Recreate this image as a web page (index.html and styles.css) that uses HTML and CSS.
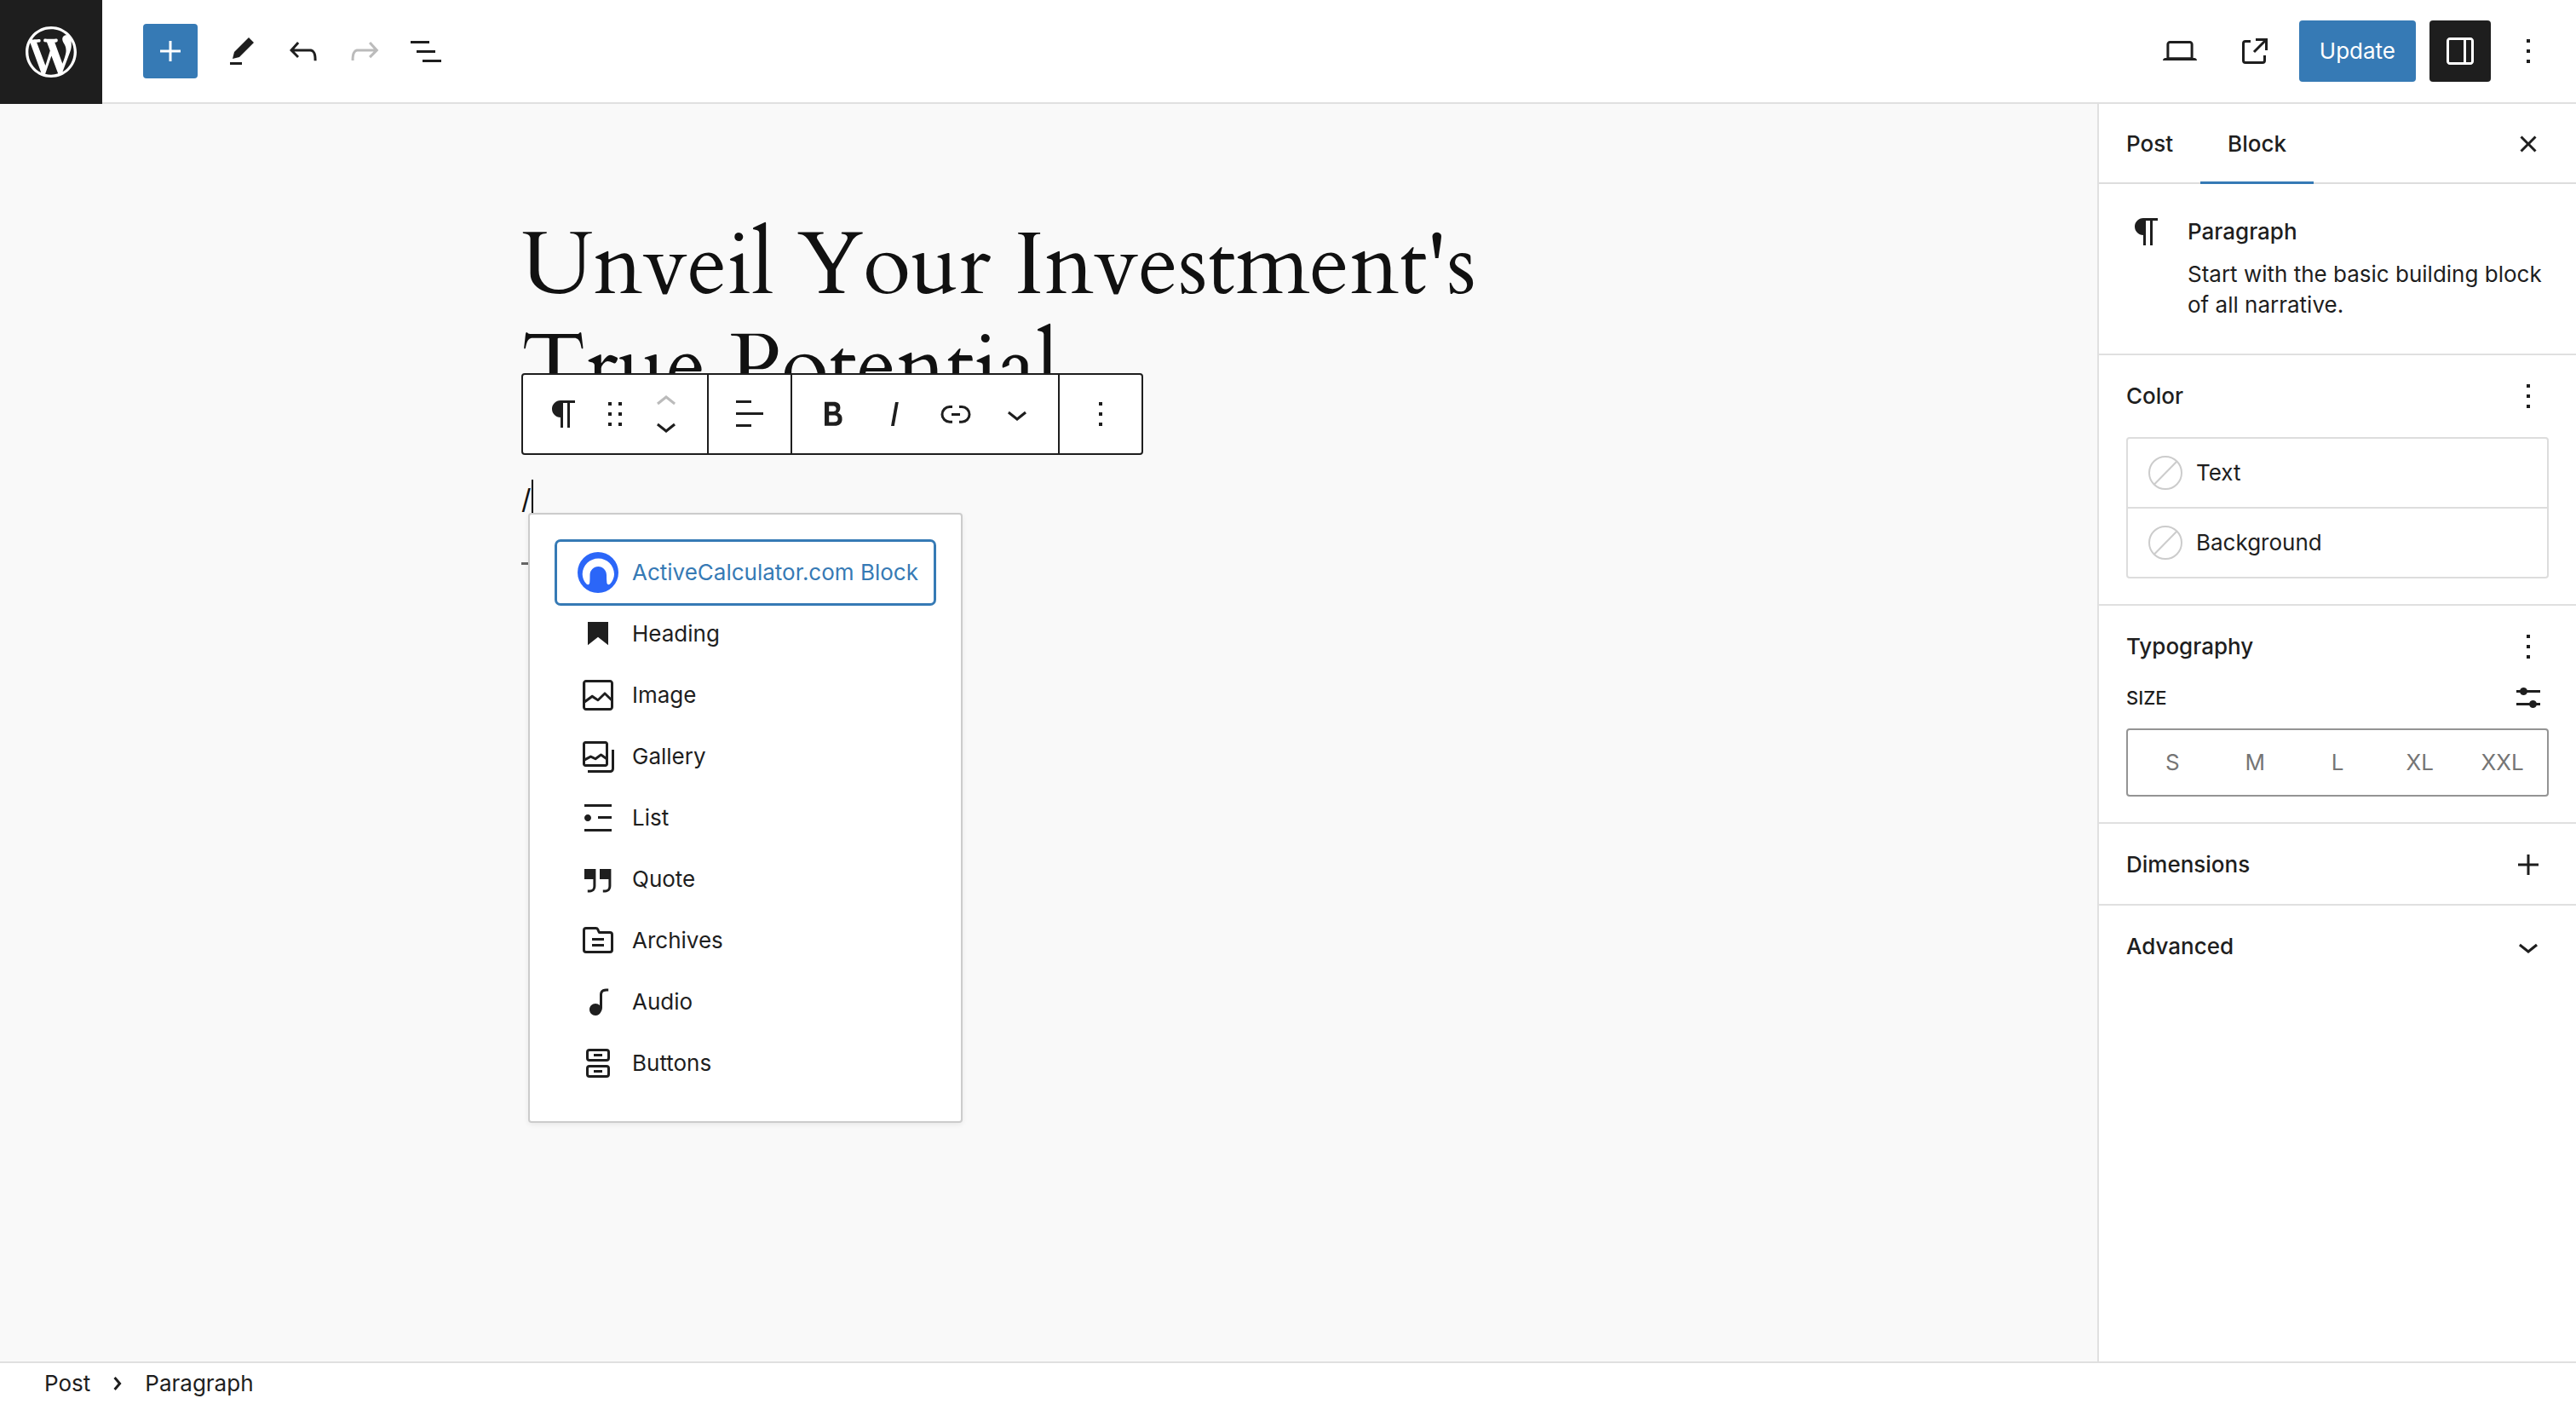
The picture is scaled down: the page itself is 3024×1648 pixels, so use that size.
FILE: index.html
```html
<!DOCTYPE html>
<html lang="en">
<head>
<meta charset="utf-8">
<title>Edit Post</title>
<link rel="stylesheet" href="styles.css">
</head>
<body>
<svg class="sprite" aria-hidden="true">
  <symbol id="more" viewBox="0 0 24 24"><path d="M13 19h-2v-2h2v2zm0-6h-2v-2h2v2zm0-6h-2V5h2v2z"/></symbol>
  <symbol id="plus" viewBox="0 0 24 24"><path d="M11.25 6h1.5v5.25H18v1.5h-5.25V18h-1.5v-5.25H6v-1.5h5.25z"/></symbol>
  <symbol id="chevron-down" viewBox="0 0 24 24"><path d="M17.5 11.6L12 16l-5.5-4.4.9-1.2L12 14l4.5-3.6 1 1.2z"/></symbol>
  <symbol id="paragraph" viewBox="0 0 24 24"><path d="m9.99609 14v-.2251l.00391.0001v6.225h1.5v-14.5h2.5v14.5h1.5v-14.5h3v-1.5h-8.50391c-2.76142 0-5 2.23858-5 5 0 2.7614 2.23858 5 5 5z"/></symbol>
</svg>
<div class="editor">
  <header class="topbar">
    <a class="home" href="#" aria-label="View Posts"><svg class="home-logo" viewBox="0 0 20 20"><path d="M20 10c0-5.51-4.49-10-10-10C4.48 0 0 4.49 0 10c0 5.52 4.48 10 10 10 5.51 0 10-4.48 10-10zM7.78 15.37L4.37 6.22c.55-.02 1.17-.08 1.17-.08.5-.06.44-1.13-.06-1.11 0 0-1.45.11-2.37.11-.18 0-.37 0-.58-.01C4.12 2.69 6.87 1.11 10 1.11c2.33 0 4.45.87 6.05 2.34-.68-.11-1.65.39-1.65 1.58 0 .74.45 1.36.9 2.1.35.61.55 1.36.55 2.46 0 1.49-1.4 5-1.4 5l-3.03-8.37c.54-.02.82-.17.82-.17.5-.05.44-1.25-.06-1.22 0 0-1.44.12-2.38.12-.87 0-2.33-.12-2.33-.12-.5-.03-.56 1.2-.06 1.22l.92.08 1.26 3.41zM17.41 10c.24-.64.74-1.87.43-4.25.7 1.29 1.05 2.71 1.05 4.25 0 3.29-1.73 6.24-4.4 7.78.97-2.59 1.94-5.2 2.92-7.78zM6.1 18.09C3.12 16.65 1.11 13.53 1.11 10c0-1.3.23-2.48.72-3.59C3.25 10.3 4.67 14.2 6.1 18.09zm4.03-6.63l2.58 6.98c-.86.29-1.76.45-2.71.45-.79 0-1.57-.11-2.29-.33.81-2.38 1.62-4.74 2.42-7.1z"/></svg></a>
    <div class="bar">
      <div class="tools">
        <button class="inserter" aria-label="Add block"><svg class="icon"><use href="#plus"/></svg></button>
        <button class="tool" aria-label="Tools"><svg class="icon" viewBox="0 0 24 24"><path d="m19 7-3-3-8.5 8.5-1 4 4-1L19 7Zm-7 11.5H5V20h7v-1.5Z"/></svg></button>
        <button class="tool" aria-label="Undo"><svg class="icon" viewBox="0 0 24 24"><path d="M18.3 11.7c-.6-.6-1.4-.9-2.3-.9H6.7l2.9-3.3-1.1-1-4.5 5L8.5 16l1-1-2.7-2.7H16c.5 0 .9.2 1.3.5 1 1 1 3.4 1 4.5v.3h1.5v-.2c0-1.5 0-4.3-1.5-5.7z"/></svg></button>
        <button class="tool" aria-label="Redo" disabled><svg class="icon" viewBox="0 0 24 24"><path d="M15.6 6.5l-1.1 1 2.9 3.3H8c-.9 0-1.7.3-2.3.9-1.4 1.5-1.4 4.2-1.4 5.6v.2h1.5v-.3c0-1.1 0-3.5 1-4.5.3-.3.7-.5 1.3-.5h9.2L14.5 15l1.1 1.1 4.6-4.6-4.6-5z"/></svg></button>
        <button class="tool" aria-label="Document overview"><svg class="icon" viewBox="0 0 24 24"><path d="M3 6h11v1.5H3V6Zm3.5 5.5h11V13h-11v-1.5ZM21 17H10v1.5h11V17Z"/></svg></button>
      </div>
      <div class="actions">
        <button class="tool" aria-label="Preview"><svg class="icon" viewBox="0 0 24 24"><path d="M20.5 16h-.7V8c0-1.1-.9-2-2-2H6.2c-1.1 0-2 .9-2 2v8h-.7c-.8 0-1.5.7-1.5 1.5h20c0-.8-.7-1.5-1.5-1.5zM5.7 8c0-.3.2-.5.5-.5h11.6c.3 0 .5.2.5.5v7.6H5.7V8z"/></svg></button>
        <a class="tool" href="#" aria-label="View Post"><svg class="icon" viewBox="0 0 24 24"><path d="M19.5 4.5h-7V6h4.44l-5.97 5.97 1.06 1.06L18 7.06v4.44h1.5v-7Zm-13 1a2 2 0 0 0-2 2v10a2 2 0 0 0 2 2h10a2 2 0 0 0 2-2v-3H17v3a.5.5 0 0 1-.5.5h-10a.5.5 0 0 1-.5-.5v-10a.5.5 0 0 1 .5-.5h3V5.5h-3Z"/></svg></a>
        <button class="update">Update</button>
        <div class="pair">
          <button class="tool pressed" aria-label="Settings"><svg class="icon" viewBox="0 0 24 24"><path d="M18 4H6c-1.1 0-2 .9-2 2v12c0 1.1.9 2 2 2h12c1.1 0 2-.9 2-2V6c0-1.1-.9-2-2-2zm-4 14.5H6c-.3 0-.5-.2-.5-.5V6c0-.3.2-.5.5-.5h8v13zm4.5-.5c0 .3-.2.5-.5.5h-2.5v-13H18c.3 0 .5.2.5.5v12z"/></svg></button>
          <button class="tool" aria-label="Options"><svg class="icon"><use href="#more"/></svg></button>
        </div>
      </div>
    </div>
  </header>

  <div class="body">
    <main class="canvas">
      <div class="column">
        <h1 class="title">Unveil Your Investment's True Potential</h1>
        <div class="block">
          <p class="text">/<span class="caret"></span></p>
          <div class="toolbar" role="toolbar" aria-label="Block tools">
            <div class="group">
              <button class="tool" aria-label="Paragraph"><svg class="icon"><use href="#paragraph"/></svg></button>
              <button class="tool drag" aria-label="Drag"><svg class="icon" viewBox="0 0 24 24"><path d="M8 7h2V5H8v2zm0 6h2v-2H8v2zm0 6h2v-2H8v2zm6-14v2h2V5h-2zm0 8h2v-2h-2v2zm0 6h2v-2h-2v2z"/></svg></button>
              <div class="mover">
                <button class="tool" aria-label="Move up" disabled><svg class="icon" viewBox="0 0 24 24"><path d="M6.5 12.4L12 8l5.5 4.4-.9 1.2L12 10l-4.5 3.6-1-1.2z"/></svg></button>
                <button class="tool" aria-label="Move down"><svg class="icon"><use href="#chevron-down"/></svg></button>
              </div>
            </div>
            <div class="group">
              <button class="tool" aria-label="Align text"><svg class="icon" viewBox="0 0 24 24"><path d="M13 5.5H4V4h9v1.5Zm7 7H4V11h16v1.5Zm-7 7H4V18h9v1.5Z"/></svg></button>
            </div>
            <div class="group">
              <button class="tool" aria-label="Bold"><svg class="icon" viewBox="0 0 24 24"><path d="M14.7 11.3c1-.6 1.5-1.6 1.5-3 0-2.3-1.3-3.4-4-3.4H7v14h5.8c1.4 0 2.5-.3 3.3-1 .8-.7 1.2-1.7 1.2-2.9.1-1.9-.8-3.1-2.6-3.7zm-5.1-4h2.3c.6 0 1.1.1 1.4.4.3.3.5.7.5 1.2s-.2 1-.5 1.2c-.3.3-.8.4-1.4.4H9.6V7.3zm4.6 9c-.4.3-1 .4-1.7.4H9.6v-3.9h2.9c.7 0 1.3.2 1.7.5.4.3.6.8.6 1.5s-.2 1.2-.6 1.5z"/></svg></button>
              <button class="tool" aria-label="Italic"><svg class="icon" viewBox="0 0 24 24"><path d="M12.5 5L10 19h1.9l2.5-14z"/></svg></button>
              <button class="tool" aria-label="Link"><svg class="icon" viewBox="0 0 24 24"><path d="M10 17.389H8.444A5.194 5.194 0 1 1 8.444 7H10v1.5H8.444a3.694 3.694 0 0 0 0 7.389H10v1.5ZM14 7h1.556a5.194 5.194 0 0 1 0 10.39H14v-1.5h1.556a3.694 3.694 0 0 0 0-7.39H14V7Zm-4.5 6h5v-1.5h-5V13Z"/></svg></button>
              <button class="tool" aria-label="More"><svg class="icon"><use href="#chevron-down"/></svg></button>
            </div>
            <div class="group">
              <button class="tool" aria-label="Options"><svg class="icon"><use href="#more"/></svg></button>
            </div>
          </div>
          <div class="menu">
            <button class="item selected"><svg class="icon" viewBox="0 0 48 48"><circle cx="24" cy="24" r="24" fill="#2b66f8"/><path fill="#fff" d="M24.500 7.500C14.500 7.500 5.700 15.500 5.700 26c0 4 1.800 8.500 4.800 11.500 1.600 1.300 3.200.8 3.700-1.300.3-3 .3-6.200.3-9.200 0-5.500 4.300-10 9.800-10s9.700 4.500 9.700 10c0 3 0 6.200.4 9.200.5 2.100 2.200 2.600 3.700 1.200 3-3 4.900-7.400 4.900-11.400C43 15.500 34.500 7.500 24.500 7.500z"/></svg>ActiveCalculator.com Block</button>
            <button class="item"><svg class="icon" viewBox="0 0 24 24"><path d="M6 5V18.5911L12 13.8473L18 18.5911V5H6Z"/></svg>Heading</button>
            <button class="item"><svg class="icon" viewBox="0 0 24 24"><path d="M19 3H5c-1.1 0-2 .9-2 2v14c0 1.1.9 2 2 2h14c1.1 0 2-.9 2-2V5c0-1.1-.9-2-2-2zM5 4.5h14c.3 0 .5.2.5.5v8.4l-3-2.9c-.3-.3-.8-.3-1 0L11.900 14 9 12c-.3-.2-.6-.2-.8 0l-3.600 2.600V5c-.1-.3.1-.5.4-.5zm14 15H5c-.3 0-.5-.2-.5-.5v-2.400l4.100-3 3 1.900c.3.2.7.2.9-.1L16 12l3.500 3.400V19c0 .3-.2.5-.5.5z"/></svg>Image</button>
            <button class="item"><svg class="icon" viewBox="0 0 24 24"><path fill-rule="evenodd" d="M16.375 4.5H4.625a.125.125 0 0 0-.125.125v8.254l2.859-1.54a.75.75 0 0 1 .68-.016l2.384 1.142 2.89-2.074a.75.75 0 0 1 .874 0l2.313 1.66V4.625a.125.125 0 0 0-.125-.125Zm.125 9.398-2.75-1.975-2.813 2.02a.75.75 0 0 1-.76.067l-2.444-1.17L4.5 14.583v1.792c0 .069.056.125.125.125h11.75a.125.125 0 0 0 .125-.125v-2.477ZM4.625 3C3.728 3 3 3.728 3 4.625v11.75C3 17.273 3.728 18 4.625 18h11.75c.898 0 1.625-.727 1.625-1.625V4.625C18 3.728 17.273 3 16.375 3H4.625ZM20 8v11c0 .69-.31 1-.999 1H6v1.5h13.001c1.52 0 2.499-.982 2.499-2.5V8H20Z"/></svg>Gallery</button>
            <button class="item"><svg class="icon" viewBox="0 0 24 24"><path d="M4 4v1.500h16V4H4zm8 8.500h8V11h-8v1.500zM4 20h16v-1.500H4V20zm4-8c0-1.100-.9-2-2-2s-2 .9-2 2 .9 2 2 2 2-.9 2-2z"/></svg>List</button>
            <button class="item"><svg class="icon" viewBox="0 0 24 24"><path d="M13 6v6h5.200v4c0 .8-.2 1.400-.5 1.700-.6.6-1.600.6-2.500.5h-.3v1.500h.5c1 0 2.300-.1 3.300-1 .6-.6 1-1.600 1-2.800V6H13zm-9 6h5.200v4c0 .8-.2 1.400-.5 1.700-.6.6-1.600.6-2.500.5h-.3v1.500h.5c1 0 2.300-.1 3.300-1 .6-.6 1-1.600 1-2.800V6H4v6z"/></svg>Quote</button>
            <button class="item"><svg class="icon" viewBox="0 0 24 24"><path fill-rule="evenodd" d="M11.934 7.406a1 1 0 0 0 .914.594H19a.5.5 0 0 1 .5.5v9a.5.5 0 0 1-.5.5H5a.5.5 0 0 1-.5-.5V6a.5.5 0 0 1 .5-.5h5.764a.5.5 0 0 1 .447.276l.723 1.63Zm1.064-1.216a.5.5 0 0 0 .462.31H19a2 2 0 0 1 2 2v9a2 2 0 0 1-2 2H5a2 2 0 0 1-2-2V6a2 2 0 0 1 2-2h5.764a2 2 0 0 1 1.789 1.106l.445 1.084ZM8.5 10.5h7V12h-7v-1.5Zm7 3.5h-7v1.5h7V14Z"/></svg>Archives</button>
            <button class="item"><svg class="icon" viewBox="0 0 24 24"><path d="M17.7 4.3c-1.2 0-2.8 0-3.8 1-.6.6-.9 1.5-.9 2.6V14c-.6-.6-1.5-1-2.5-1C8.6 13 7 14.6 7 16.5S8.6 20 10.5 20c1.5 0 2.8-1 3.3-2.3.5-.8.7-1.8.7-2.5V7.9c0-.7.2-1.2.5-1.6.6-.6 1.8-.6 2.8-.6h.3V4.3h-.4z"/></svg>Audio</button>
            <button class="item"><svg class="icon" viewBox="0 0 24 24"><path fill-rule="evenodd" d="M14.5 17.5h-5V16h5v1.500Zm0-9.500h-5V6.500h5V8ZM7 3.500h10a2 2 0 0 1 2 2V9a2 2 0 0 1-2 2H7a2 2 0 0 1-2-2V5.500a2 2 0 0 1 2-2ZM17 5H7a.5.5 0 0 0-.5.5V9a.5.5 0 0 0 .5.5h10a.5.5 0 0 0 .5-.5V5.500A.5.5 0 0 0 17 5ZM7 13h10a2 2 0 0 1 2 2v3.500a2 2 0 0 1-2 2H7a2 2 0 0 1-2-2V15a2 2 0 0 1 2-2Zm10 1.500H7a.5.5 0 0 0-.5.5v3.500a.5.5 0 0 0 .5.5h10a.5.5 0 0 0 .5-.5V15a.5.5 0 0 0-.5-.5Z"/></svg>Buttons</button>
          </div>
        </div>
        <hr class="separator">
      </div>
    </main>

    <aside class="sidebar">
      <div class="tabs">
        <button class="tab">Post</button>
        <button class="tab active">Block</button>
        <button class="close" aria-label="Close Settings"><svg class="icon" viewBox="0 0 24 24"><path d="M12 13.060l3.712 3.713 1.061-1.060L13.061 12l3.712-3.712-1.060-1.060L12 10.938 8.288 7.227l-1.061 1.060L10.939 12l-3.712 3.712 1.060 1.061L12 13.061z"/></svg></button>
      </div>
      <section class="card">
        <svg class="icon"><use href="#paragraph"/></svg>
        <div class="card-text">
          <h2 class="heading">Paragraph</h2>
          <p class="description">Start with the basic building block of all narrative.</p>
        </div>
      </section>
      <section class="panel">
        <div class="panel-head"><h2 class="heading">Color</h2><button class="mini" aria-label="Color options"><svg class="icon"><use href="#more"/></svg></button></div>
        <div class="colors">
          <button class="color"><svg class="swatch" viewBox="0 0 40 40"><circle cx="20" cy="20" r="19"/><path d="M7 33.500 33.500 6.500"/></svg>Text</button>
          <button class="color"><svg class="swatch" viewBox="0 0 40 40"><circle cx="20" cy="20" r="19"/><path d="M7 33.500 33.500 6.500"/></svg>Background</button>
        </div>
      </section>
      <section class="panel">
        <div class="panel-head"><h2 class="heading">Typography</h2><button class="mini" aria-label="Typography options"><svg class="icon"><use href="#more"/></svg></button></div>
        <div class="size-head"><h3 class="label">SIZE</h3><button class="mini" aria-label="Set custom size"><svg class="icon" viewBox="0 0 24 24"><path d="m19 7.500h-7.628c-.3089-.87389-1.1423-1.500-2.122-1.500-.97966 0-1.81309.62611-2.12197 1.500h-2.12803v1.500h2.12803c.30888.87389 1.14231 1.500 2.12197 1.500.9797 0 1.8131-.62611 2.122-1.500h7.628zM19 15h-2.128c-.3089-.8739-1.1423-1.500-2.122-1.500s-1.8131.6261-2.122 1.500h-7.628v1.500h7.628c.3089.8739 1.1423 1.500 2.122 1.500s1.8131-.6261 2.122-1.500h2.128z"/></svg></button></div>
        <div class="sizes" role="radiogroup" aria-label="Font size">
          <label class="size"><input class="radio" type="radio" name="size">S</label>
          <label class="size"><input class="radio" type="radio" name="size">M</label>
          <label class="size"><input class="radio" type="radio" name="size">L</label>
          <label class="size"><input class="radio" type="radio" name="size">XL</label>
          <label class="size"><input class="radio" type="radio" name="size">XXL</label>
        </div>
      </section>
      <section class="panel folded">
        <div class="panel-head"><h2 class="heading">Dimensions</h2><button class="mini" aria-label="Dimensions options"><svg class="icon"><use href="#plus"/></svg></button></div>
      </section>
      <section class="panel folded">
        <div class="panel-head"><h2 class="heading">Advanced</h2><button class="mini" aria-label="Open Advanced"><svg class="icon"><use href="#chevron-down"/></svg></button></div>
      </section>
    </aside>
  </div>

  <footer class="breadcrumb">
    <button class="crumb">Post</button>
    <svg class="icon" viewBox="0 0 24 24"><path d="M10.8622 8.04053L14.2805 12.0286L10.8622 16.0167L9.72327 15.0405L12.3049 12.0286L9.72327 9.01672L10.8622 8.04053Z"/></svg>
    <span class="crumb">Paragraph</span>
  </footer>
</div>
</body>
</html>
```
FILE: styles.css
```css
*, *::before, *::after { box-sizing: border-box; }

body {
  margin: 0;
  background: #fff;
  color: #1e1e1e;
  font-family: Inter, "Liberation Sans", sans-serif;
  font-size: 26px;
  line-height: 36px;
}

h1, h2, h3, p { margin: 0; }

button, a {
  margin: 0;
  padding: 0;
  border: 0;
  background: none;
  color: inherit;
  font: inherit;
  text-decoration: none;
}

.sprite { display: none; }

.icon {
  flex: none;
  display: block;
  width: 48px;
  height: 48px;
  fill: currentColor;
}

.editor {
  display: flex;
  flex-direction: column;
  min-height: 100vh;
}

/* Top bar */
.topbar { display: flex; }

.home {
  display: flex;
  align-items: center;
  justify-content: center;
  width: 120px;
  height: 122px;
  background: #1e1e1e;
  color: #fff;
}

.home-logo {
  width: 60px;
  height: 60px;
  fill: currentColor;
}

.bar {
  flex: 1;
  display: flex;
  align-items: center;
  justify-content: space-between;
  padding: 0 20px 0 48px;
  border-bottom: 2px solid #e0e0e0;
}

.tools, .actions, .pair { display: flex; align-items: center; }
.actions { gap: 16px; }
.pair { gap: 8px; }

.tool {
  display: flex;
  align-items: center;
  justify-content: center;
  width: 72px;
  height: 72px;
}

.tool:disabled { color: #bbb; }

.inserter {
  display: flex;
  align-items: center;
  justify-content: center;
  width: 64px;
  height: 64px;
  margin-right: 16px;
  border-radius: 4px;
  background: #367ab5;
  color: #fff;
}

.update {
  height: 72px;
  padding: 0 24px;
  border-radius: 4px;
  background: #367ab5;
  color: #fff;
}

.pressed {
  border-radius: 4px;
  background: #1e1e1e;
  color: #fff;
}

/* Canvas */
.body { flex: 1; display: flex; }

.canvas {
  flex: 1;
  padding: 130px 48px;
  background: #f9f9f9;
  color: #111;
}

.column { max-width: 1238px; margin: 0 auto; }

.title {
  font-family: Cardo, "EB Garamond", "Liberation Serif", serif;
  font-size: 103px;
  font-weight: 400;
  line-height: 119px;
}

.block { position: relative; margin-top: 67px; }

.text {
  display: flex;
  align-items: center;
  height: 58px;
  font-size: 32px;
}

.caret { width: 2px; height: 46px; background: #000; }

.separator {
  width: 200px;
  height: 3px;
  margin: 45px 0 0;
  border: 0;
  background: #666;
}

.toolbar {
  position: absolute;
  bottom: 81px;
  left: 0;
  display: flex;
  height: 96px;
  border: 2px solid #1e1e1e;
  border-radius: 4px;
  background: #fff;
  color: #1e1e1e;
}

.group {
  display: flex;
  align-items: center;
  padding: 0 12px;
}

.group + .group { border-left: 2px solid #1e1e1e; }
.drag { width: 48px; }
.mover .tool { height: 28px; }

.menu {
  position: absolute;
  top: 45px;
  left: 8px;
  display: flex;
  flex-direction: column;
  width: 510px;
  padding: 32px;
  border: 2px solid #ccc;
  border-radius: 4px;
  background: #fff;
  color: #1e1e1e;
  box-shadow: 0 2px 6px rgba(0, 0, 0, .07);
}

.item {
  display: flex;
  align-items: center;
  gap: 16px;
  height: 72px;
  padding: 0 24px;
  border-radius: 4px;
  white-space: nowrap;
}

.selected {
  color: #367ab5;
  box-shadow: 0 0 0 3px #367ab5;
}

/* Sidebar */
.sidebar {
  flex: none;
  width: 562px;
  border-left: 2px solid #e0e0e0;
}

.tabs {
  display: flex;
  height: 94px;
  padding-right: 32px;
  box-shadow: inset 0 -2px #ddd;
}

.tab {
  padding: 0 32px;
  font-weight: 500;
}

.active { box-shadow: inset 0 -3px #367ab5; }
.close { margin-left: auto; }

.heading {
  font-size: 26px;
  font-weight: 500;
  line-height: 48px;
}

.card {
  display: flex;
  gap: 24px;
  padding: 32px 32px 39px;
}

.description { margin-top: 8px; }

.panel {
  padding: 24px 32px 30px;
  border-top: 2px solid #e0e0e0;
}

.folded { padding-bottom: 22px; }

.panel-head, .size-head {
  display: flex;
  align-items: center;
  justify-content: space-between;
}

.colors {
  margin-top: 24px;
  border: 2px solid #ddd;
  border-radius: 4px;
}

.color {
  display: flex;
  align-items: center;
  gap: 16px;
  width: 100%;
  height: 80px;
  padding: 0 24px;
}

.color + .color { height: 82px; border-top: 2px solid #ddd; }

.swatch {
  width: 40px;
  height: 40px;
  fill: none;
  stroke: #ccc;
  stroke-width: 2;
}

.size-head { margin: 12px 0; }

.label {
  font-size: 22px;
  font-weight: 500;
}

.sizes {
  display: flex;
  height: 80px;
  padding: 4px;
  border: 2px solid #949494;
  border-radius: 4px;
  color: #757575;
}

.size {
  flex: 1;
  display: flex;
  align-items: center;
  justify-content: center;
}

.radio {
  position: absolute;
  margin: 0;
  opacity: 0;
}

/* Footer */
.breadcrumb {
  display: flex;
  align-items: center;
  gap: 8px;
  height: 50px;
  padding: 0 52px;
  border-top: 2px solid #e0e0e0;
}
```
